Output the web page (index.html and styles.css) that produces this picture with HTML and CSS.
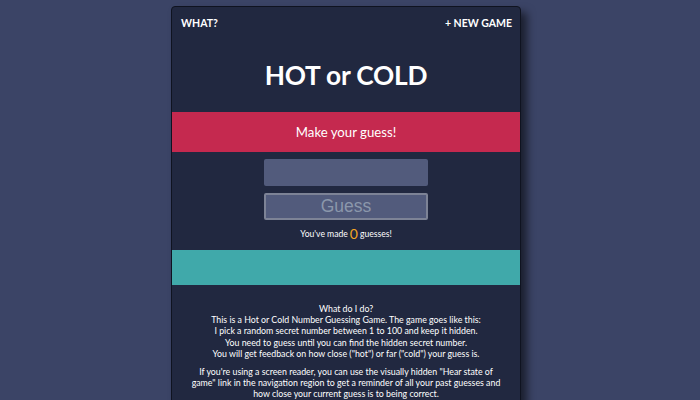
FILE: index.html
```html
<!DOCTYPE html>
<html lang="en">
<head>
<meta charset="utf-8">
<title>Hot or Cold</title>
<link rel="stylesheet" href="styles.css">
</head>
<body>
<div class="page">
  <main class="card">
    <nav class="nav">
      <a class="nav-link" href="#">What?</a>
      <a class="nav-link" href="#">+ New Game</a>
    </nav>
    <h1 class="title">HOT or COLD</h1>
    <div class="feedback">Make your guess!</div>
    <form class="guess-form">
      <input class="guess-input" type="text" aria-label="Enter your guess">
      <button class="guess-button" type="button">Guess</button>
      <p class="count">You've made <span class="count-num">0</span> guesses!</p>
    </form>
    <div class="history"></div>
    <section class="info">
      <p>What do I do?<br>
      This is a Hot or Cold Number Guessing Game. The game goes like this:<br>
      I pick a random secret number between 1 to 100 and keep it hidden.<br>
      You need to guess until you can find the hidden secret number.<br>
      You will get feedback on how close ("hot") or far ("cold") your guess is.</p>
      <p>If you're using a screen reader, you can use the visually hidden "Hear state of game" link in the navigation region to get a reminder of all your past guesses and how close your current guess is to being correct.</p>
    </section>
  </main>
</div>
</body>
</html>
```

FILE: styles.css
```css
html, body {
  margin: 0;
  padding: 0;
  background: #3b4466;
  font-family: Lato, "Open Sans", sans-serif;
  color: #ffffff;
  overflow: hidden;
}

.page {
  display: flex;
  justify-content: center;
  padding: 6px 8px 0 0;
}

.card {
  width: 348px;
  background: #212840;
  border: 1px solid #0f1320;
  border-radius: 4px;
  box-shadow: 6px 6px 8px rgba(0, 0, 0, 0.55);
  padding-bottom: 20px;
}

.nav {
  display: flex;
  justify-content: space-between;
  padding: 9px 8px 0 9px;
}

.nav-link {
  color: #ffffff;
  text-decoration: none;
  text-transform: uppercase;
  font-weight: 700;
  font-size: 10.5px;
  line-height: 15px;
}

.title {
  margin: 28px 0 0;
  text-align: center;
  font-size: 26.3px;
  font-weight: 700;
  line-height: 32px;
  letter-spacing: -0.2px;
}

.feedback {
  margin-top: 21px;
  height: 40px;
  background: #c5294f;
  display: flex;
  align-items: center;
  justify-content: center;
  font-size: 13.2px;
}

.guess-form {
  display: flex;
  flex-direction: column;
  align-items: center;
  margin: 0;
  padding-top: 7px;
}

.guess-input {
  box-sizing: border-box;
  width: 164px;
  height: 27px;
  background: #525b7c;
  border: none;
  border-radius: 2px;
  margin: 0;
}

.guess-button {
  box-sizing: border-box;
  width: 164px;
  height: 27px;
  margin-top: 7px;
  background: #525b7c;
  border: 2px solid #7d8396;
  border-radius: 2px;
  font-family: "Liberation Sans", Arial, sans-serif;
  font-size: 17.5px;
  color: #8b97ab;
  padding: 0;
}

.count {
  margin: 8px 0 0;
  font-size: 8.6px;
  line-height: 12px;
  display: flex;
  align-items: center;
  gap: 2px;
}

.count-num {
  color: #f5a623;
  font-size: 14px;
  line-height: 12px;
}

.history {
  margin-top: 10px;
  height: 35px;
  background: #40a9aa;
}

.info {
  padding: 18px 17px 0;
  text-align: center;
  font-size: 8.8px;
  line-height: 11.2px;
}

.info p {
  margin: 0 0 7px;
}
```
